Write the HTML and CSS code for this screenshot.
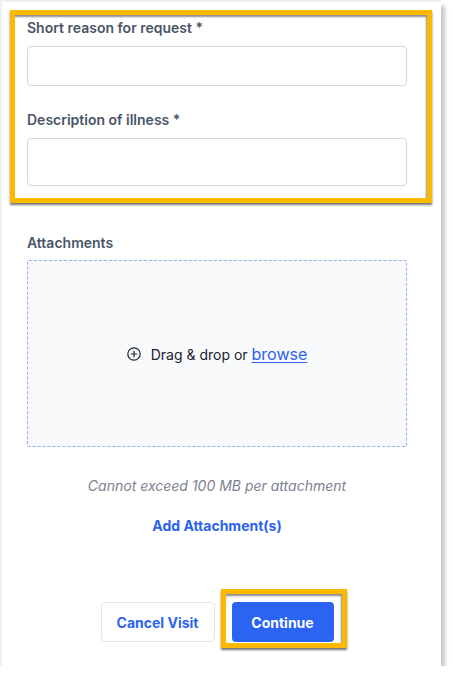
FILE: index.html
```html
<!DOCTYPE html>
<html lang="en">
<head>
    <meta charset="UTF-8">
    <meta name="viewport" content="width=device-width, initial-scale=1.0">
    <title>Visit request</title>
    <link rel="stylesheet" href="styles.css">
</head>
<body>
    <div class="page">
        <div class="card">
            <div class="field-group">
                <div class="field">
                    <label class="field-label">Short reason for request *</label>
                    <div class="input short"></div>
                </div>
                <div class="field">
                    <label class="field-label">Description of illness *</label>
                    <div class="input tall"></div>
                </div>
            </div>

            <div class="attachments">
                <label class="field-label">Attachments</label>
                <div class="dropzone">
                    <svg class="plus-icon" width="14" height="14" viewBox="0 0 14 14">
                        <circle cx="7" cy="7" r="6.2" fill="none" stroke="#1f2633" stroke-width="1.2"/>
                        <path d="M7 4.2v5.6M4.2 7h5.6" stroke="#1f2633" stroke-width="1.2" stroke-linecap="round"/>
                    </svg>
                    <span class="drop-text">Drag &amp; drop or <a class="browse">browse</a></span>
                </div>
                <div class="limit">Cannot exceed 100 MB per attachment</div>
                <div class="add-link">Add Attachment(s)</div>
            </div>

            <div class="actions">
                <button class="btn btn-cancel">Cancel Visit</button>
                <div class="continue-wrap">
                    <button class="btn btn-continue">Continue</button>
                </div>
            </div>
        </div>
    </div>
</body>
</html>
```

FILE: styles.css
```css
body {
    margin: 0;
    background: #fff;
    font-family: Inter, "Noto Sans", Arial, sans-serif;
}

.page {
    display: inline-block;
    padding: 2px 0 0 2px;
    background: #eef2f6;
}

.card {
    width: 439px;
    height: 664px;
    box-sizing: border-box;
    background: #fff;
    padding: 16px 34px 0 25px;
    box-shadow: 4px 4px 4px rgba(0, 0, 0, 0.22);
}

/* yellow annotation around the two fields */
.field-group {
    position: relative;
    display: flex;
    flex-direction: column;
    gap: 24px;
}
.field-group::before {
    content: "";
    position: absolute;
    top: -8px;
    left: -17px;
    right: -25px;
    bottom: -17px;
    border: 5px solid #fbb900;
    box-shadow: 0 2px 2px rgba(0, 0, 0, 0.55), inset -1px 2px 2px rgba(0, 0, 0, 0.45);
    pointer-events: none;
}

.field {
    display: flex;
    flex-direction: column;
    gap: 8px;
}

.field-label {
    font-size: 14px;
    line-height: 20px;
    font-weight: 600;
    color: #4a5568;
}

.input {
    border: 1px solid #d3d6de;
    border-radius: 4px;
    box-sizing: border-box;
}
.input.short { height: 40px; }
.input.tall { height: 48px; }

.attachments {
    margin-top: 47px;
    display: flex;
    flex-direction: column;
}
.attachments .field-label {
    margin-bottom: 7px;
}

.dropzone {
    height: 187px;
    box-sizing: border-box;
    border: 1px dashed #8fb1f7;
    border-radius: 2px;
    background: #f8f9fb;
    display: flex;
    align-items: center;
    justify-content: center;
    gap: 10px;
}

.drop-text {
    font-size: 14px;
    color: #1d2330;
}
.browse {
    font-size: 16px;
    color: #2b63f0;
    text-decoration: underline;
    text-underline-offset: 2px;
    text-decoration-thickness: 1px;
}

.limit {
    margin-top: 29px;
    text-align: center;
    font-size: 14px;
    line-height: 20px;
    font-style: italic;
    color: #7b8190;
}

.add-link {
    margin-top: 20px;
    text-align: center;
    font-size: 14px;
    line-height: 20px;
    font-weight: 700;
    color: #2b63f0;
}

.actions {
    margin-top: 66px;
    display: flex;
    justify-content: center;
    gap: 17px;
}

.btn {
    height: 40px;
    border-radius: 4px;
    font-family: inherit;
    font-size: 14px;
    font-weight: 700;
}
.btn-cancel {
    width: 114px;
    background: #fff;
    border: 1px solid #e3e5ea;
    color: #2b63f0;
}
.btn-continue {
    width: 102px;
    background: #2b63f3;
    border: none;
    color: #fff;
}

/* yellow annotation around Continue */
.continue-wrap {
    position: relative;
}
.continue-wrap::before {
    content: "";
    position: absolute;
    top: -13px;
    left: -11px;
    right: -13px;
    bottom: -6px;
    border: 5px solid #fbb900;
    box-shadow: 0 2px 2px rgba(0, 0, 0, 0.55), inset -1px 2px 2px rgba(0, 0, 0, 0.45);
    pointer-events: none;
}
```
